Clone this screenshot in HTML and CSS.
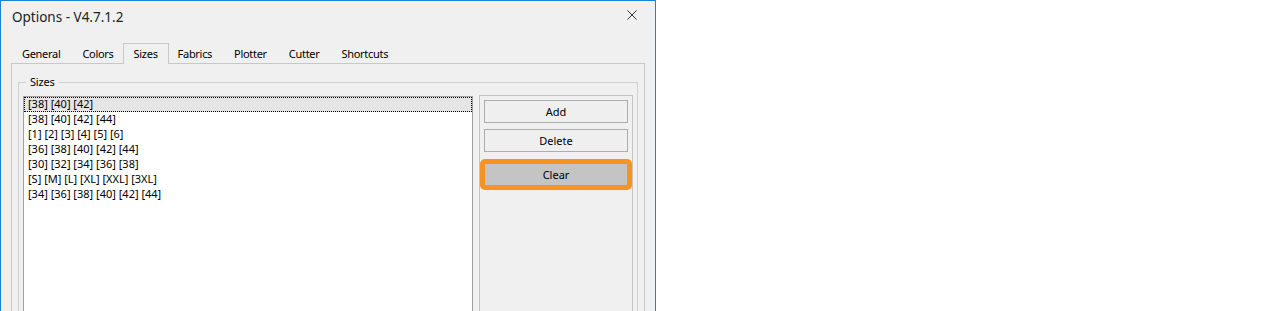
FILE: index.html
```html
<!DOCTYPE html>
<html lang="en">
<head>
  <meta charset="UTF-8" />
  <title>Options - V4.7.1.2</title>
  <link rel="stylesheet" href="styles.css">
</head>
<body>
  <div class="window">
    <!-- Title bar -->
    <div class="titlebar">
      <span class="title">Options - V4.7.1.2</span>
      <svg class="close" width="10" height="10" viewBox="0 0 10 10">
        <path d="M0.5 0.5 L9.5 9.5 M9.5 0.5 L0.5 9.5" stroke="#333" stroke-width="1" fill="none"/>
      </svg>
    </div>

    <!-- Tabs -->
    <div class="tabs">
      <div class="tab">General</div>
      <div class="tab">Colors</div>
      <div class="tab active">Sizes</div>
      <div class="tab">Fabrics</div>
      <div class="tab">Plotter</div>
      <div class="tab">Cutter</div>
      <div class="tab">Shortcuts</div>
    </div>

    <div class="tab-panel">
      <fieldset class="group">
        <legend>Sizes</legend>
        <div class="group-body">
          <ul class="size-list">
            <li class="focused">[38] [40] [42]</li>
            <li>[38] [40] [42] [44]</li>
            <li>[1] [2] [3] [4] [5] [6]</li>
            <li>[36] [38] [40] [42] [44]</li>
            <li>[30] [32] [34] [36] [38]</li>
            <li>[S] [M] [L] [XL] [XXL] [3XL]</li>
            <li>[34] [36] [38] [40] [42] [44]</li>
          </ul>
          <div class="actions">
            <button>Add</button>
            <button>Delete</button>
            <button class="clear">Clear</button>
          </div>
        </div>
      </fieldset>
    </div>
  </div>
</body>
</html>
```

FILE: styles.css
```css
html, body {
  margin: 0;
  height: 100%;
  overflow: hidden;
}
body {
  background: #fff;
  font-family: "Noto Sans", "Open Sans", sans-serif;
  font-size: 11px;
  color: #000;
}
.window {
  width: 654px;
  border: 1px solid #1883d7;
  border-bottom: none;
  background: #f0f0f0;
}
.titlebar {
  height: 32px;
  display: flex;
  justify-content: space-between;
  align-items: flex-start;
  padding: 0 18px 0 11px;
}
.title {
  font-size: 13.5px;
  line-height: 20px;
  margin-top: 6px;
  color: #222;
}
.close {
  margin-top: 9px;
}
.tabs {
  display: flex;
  align-items: flex-end;
  margin: 10px 10px -1px;
  position: relative;
  z-index: 1;
}
.tab {
  height: 20px;
  line-height: 20px;
  padding: 0 10px;
  border: 1px solid transparent;
  border-bottom: none;
  letter-spacing: -0.3px;
}
.tab.active {
  border-color: #c8c8c8;
  background: #f0f0f0;
  margin: 0 -2px;
}
.tab-panel {
  margin: 0 10px;
  border: 1px solid #c8c8c8;
  border-bottom: none;
  padding: 0 6px;
}
.group {
  margin: 11px 0 0;
  padding: 7px 4px 4px;
  border: 1px solid #d0d0d0;
  min-width: 0;
}
.group legend {
  margin-left: 3px;
  padding: 0 4px;
  line-height: 14px;
  letter-spacing: -0.2px;
}
.group-body {
  display: flex;
  gap: 6px;
}
.size-list {
  width: 448px;
  height: 260px;
  margin: 0;
  padding: 0;
  list-style: none;
  background: #fff;
  border: 1px solid #a0a0a0;
}
.size-list li {
  box-sizing: border-box;
  height: 15px;
  line-height: 13px;
  padding-left: 4px;
  white-space: nowrap;
}
.size-list li.focused {
  line-height: 11px;
  padding-left: 3px;
  background: #e5e5e5;
  border: 1px dotted #000;
}
.actions {
  flex: 1;
  display: flex;
  flex-direction: column;
  gap: 6px;
  padding: 4px;
  border: 1px solid #c4c4c4;
  margin-top: -1px;
}
.actions button {
  height: 23px;
  padding: 0;
  font: inherit;
  color: #000;
  background: #efefef;
  border: 1px solid #adadad;
  border-radius: 0;
}
.actions button.clear {
  position: relative;
  margin-top: 5px;
  background: #c4c4c4;
}
/* orange highlight ring */
.actions button.clear::after {
  content: "";
  position: absolute;
  inset: -5px;
  border: 5px solid #f7941d;
  border-radius: 5px;
}
```
